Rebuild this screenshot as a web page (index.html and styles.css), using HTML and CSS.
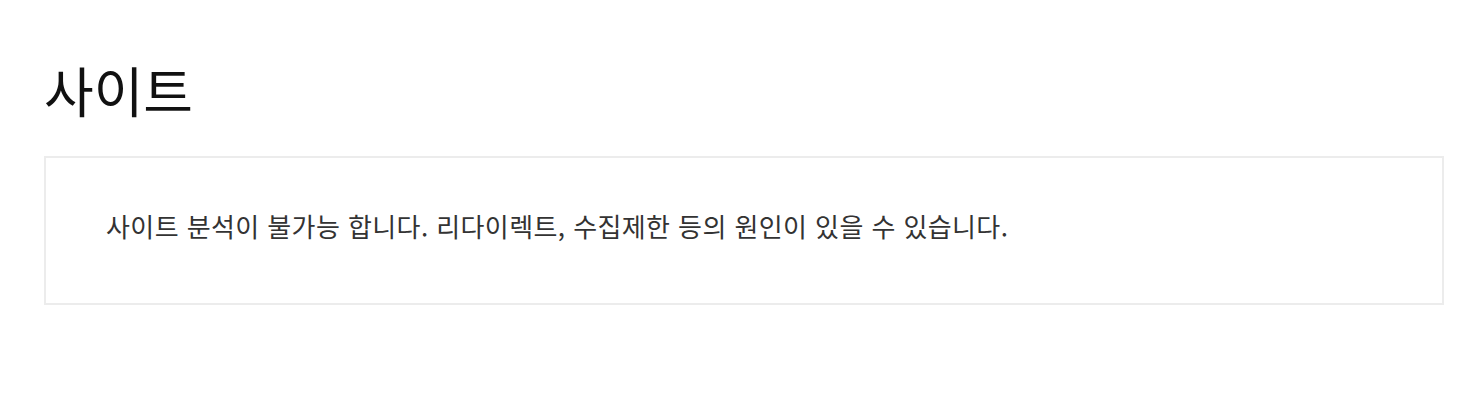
FILE: index.html
```html
<!DOCTYPE html>
<html lang="ko">
<head>
    <meta charset="UTF-8">
    <title>사이트</title>
    <link rel="stylesheet" href="styles.css">
</head>
<body>
    <div class="container">
        <h1 class="page-title">사이트</h1>
        <div class="notice-box">
            <p>사이트 분석이 불가능 합니다. 리다이렉트, 수집제한 등의 원인이 있을 수 있습니다.</p>
        </div>
    </div>
</body>
</html>
```

FILE: styles.css
```css
* {
    box-sizing: border-box;
    margin: 0;
    padding: 0;
}

body {
    font-family: 'Noto Sans CJK KR', 'Noto Sans', sans-serif;
    background: #fff;
    color: #333;
}

.container {
    padding: 52px 32px 0 44px;
}

.page-title {
    font-size: 54px;
    font-weight: 400;
    line-height: 76px;
    color: #111;
    margin-bottom: 28px;
}

.notice-box {
    border: 2px solid #ececec;
    padding: 0 60px 10px;
    height: 149px;
    display: flex;
    align-items: center;
}

.notice-box p {
    font-size: 26px;
    line-height: 32px;
    letter-spacing: 0.4px;
    color: #333;
}
```
